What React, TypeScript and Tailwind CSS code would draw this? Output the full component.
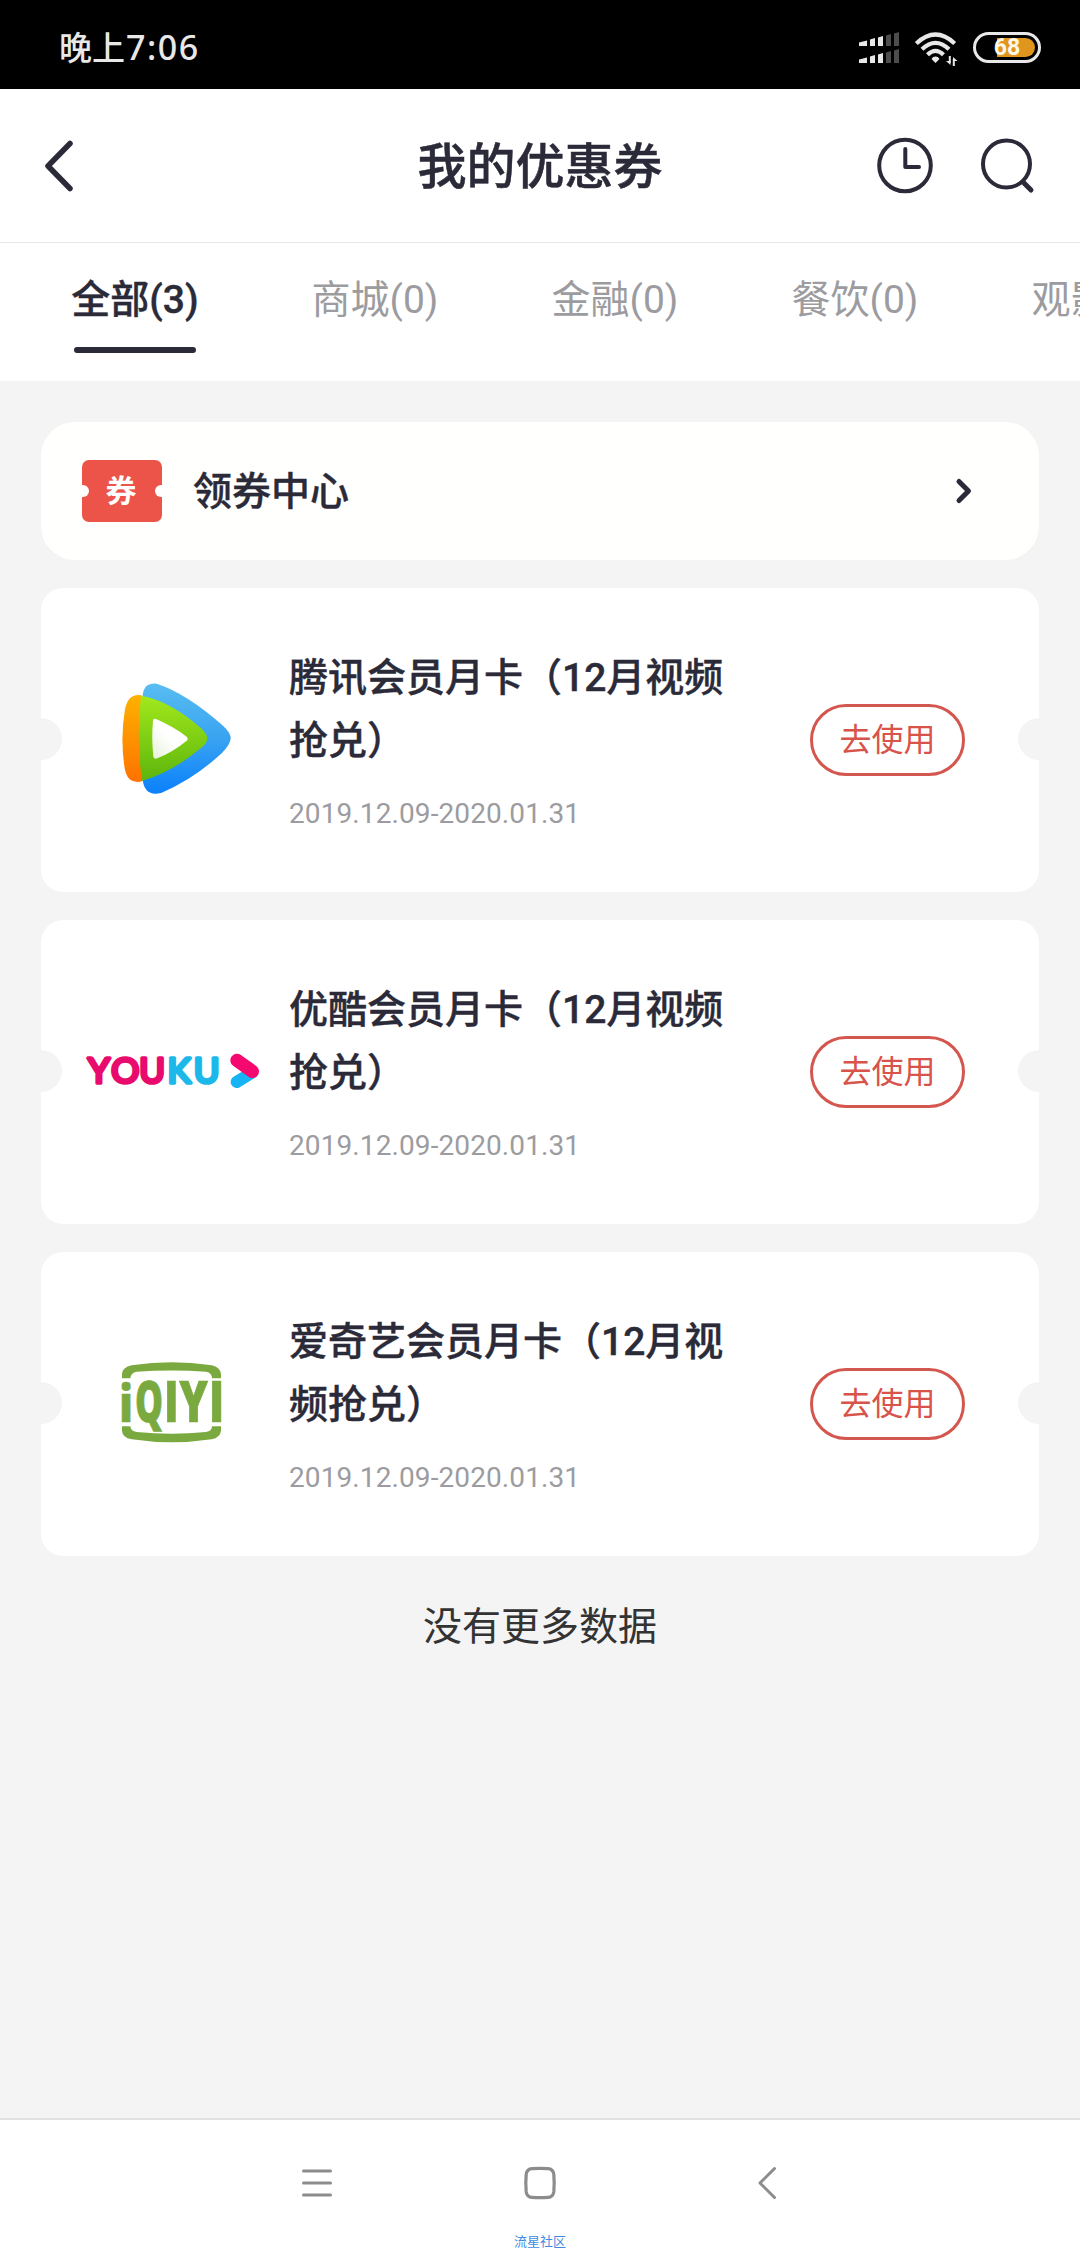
import type { ReactNode } from "react";

function Signal() {
  return (
    <svg className="mt-[6px] h-[33px] w-[41px]" viewBox="0 0 41 33">
      {[0, 17].map((y) => (
        <g key={y} transform={`translate(0 ${y})`}>
          <path d="M0 11.500l8-2V15H0zM11 8.600l5-1.500V15h-5zM19 6.500l5-1.500V15h-5z" fill="#e8e8e8" />
          <path d="M27 4.400l5-1.400v12h-5zM35 2.400L40 1v14h-5z" fill="#4d4d4d" />
        </g>
      ))}
    </svg>
  );
}

function Wifi() {
  return (
    <svg className="ml-[14px] mt-[8px] h-[34px] w-[44px]" viewBox="0 0 44 34" fill="none" stroke="#e8e8e8">
      <path d="M2.300 11.500Q21.500 -6.500 40.700 11.500" strokeWidth="4.200" />
      <path d="M8 17.300Q21.500 4.500 35 17.300" strokeWidth="4.200" />
      <path d="M13.500 22.700Q21.500 15 29.500 22.700" strokeWidth="4.200" />
      <path d="M17.500 27a4.500 4.500 0 0 1 8 0L21.500 31z" fill="#e8e8e8" stroke="none" />
      <path d="M35.800 24v7M39.800 34v-7" strokeWidth="2" />
      <path d="M32 29h4.500v4zM43.500 29H39v-4z" fill="#e8e8e8" stroke="none" />
    </svg>
  );
}

function TencentLogo() {
  return (
    <svg className="size-[178px] shrink-0" viewBox="156 213 534 534">
      <defs>
        <linearGradient id="tb" x1="0" y1="0" x2="0" y2="1">
          <stop offset="0" stopColor="#58bdf0" />
          <stop offset="0.500" stopColor="#39a3f2" />
          <stop offset="1" stopColor="#0a80fb" />
        </linearGradient>
        <linearGradient id="to" x1="0" y1="0" x2="0" y2="1">
          <stop offset="0" stopColor="#fdb200" />
          <stop offset="1" stopColor="#ff7200" />
        </linearGradient>
        <linearGradient id="tg" x1="0" y1="0" x2="0" y2="1">
          <stop offset="0" stopColor="#a2e81c" />
          <stop offset="1" stopColor="#5db50c" />
        </linearGradient>
        <linearGradient id="tw" x1="0" y1="1" x2="1" y2="0">
          <stop offset="0" stopColor="#e6f2d8" />
          <stop offset="0.500" stopColor="#fff" />
        </linearGradient>
      </defs>
      <path d="M338 345Q342 308 380 311Q470 340 580 438Q603 460 602 476Q600 494 575 520Q490 598 395 638Q345 652 338 600Z" fill="url(#tb)" />
      <path d="M335 346Q295 338 285 388Q270 475 284 565Q292 614 337 604Z" fill="url(#to)" />
      <path d="M333 347Q420 362 515 446Q533 463 532 477Q530 492 508 508Q430 574 336 603Q318 475 333 347Z" fill="url(#tg)" />
      <path d="M369 421Q371 414 380 418Q430 440 470 470Q476 477 470 482Q430 515 382 535Q373 539 370 530Q364 475 369 421Z" fill="url(#tw)" />
    </svg>
  );
}

function YoukuLogo() {
  return (
    <svg className="size-[178px] shrink-0" viewBox="156 219 534 534">
      <text
        y="519"
        textAnchor="middle"
        fontFamily="Lato, sans-serif"
        fontSize="105"
        strokeWidth="11"
        strokeLinejoin="round"
        strokeLinecap="round"
        fill="#e80a6c"
        stroke="#e80a6c"
      >
        <tspan x="207">Y</tspan>
        <tspan x="286">O</tspan>
        <tspan x="366">U</tspan>
        <tspan x="447" fill="#1cb8ea" stroke="#1cb8ea">K</tspan>
        <tspan x="530" fill="#1cb8ea" stroke="#1cb8ea">U</tspan>
      </text>
      <path d="M620 516L666 488" stroke="#16b4f4" strokeWidth="36" strokeLinecap="round" />
      <path d="M621 451L667 484" stroke="#f5086f" strokeWidth="40" strokeLinecap="round" />
    </svg>
  );
}

function IqiyiLogo() {
  const letters: [string, number, number, number][] = [
    ["i", 268, 41, 156],
    ["Q", 315, 84, 168],
    ["I", 402, 44, 168],
    ["Y", 448, 86, 168],
    ["I", 536, 47, 168],
  ];
  return (
    <svg className="size-[178px] shrink-0" viewBox="156 225 534 534" fill="#7aaa3f">
      <path d="M276 415V402Q277 382 305 376Q425 358 545 376Q571 382 573 402V415H546Q546 398 528 395Q425 388 320 395Q302 398 301 415Z" />
      <path d="M276 559H301Q302 574 320 576Q425 586 528 576Q546 574 546 559H573V572Q571 592 545 598Q425 616 305 598Q277 592 276 572Z" />
      {letters.map(([c, x, w, size]) => (
        <text
          key={x}
          x={x}
          y="547"
          fontFamily="'Open Sans', sans-serif"
          fontSize={size}
          fontWeight="800"
          textLength={w}
          lengthAdjust="spacingAndGlyphs"
          stroke="#7aaa3f"
          strokeWidth="2"
        >
          {c}
        </text>
      ))}
    </svg>
  );
}

const TABS = ["全部(3)", "商城(0)", "金融(0)", "餐饮(0)", "观影(0)"];

function Coupon({ logo, name }: { logo: ReactNode; name: string }) {
  return (
    <article className="relative flex h-[304px] items-center overflow-hidden rounded-[22px] bg-white pl-[41px] pr-[74px]">
      <span className="absolute -left-[21px] top-[130px] size-[42px] rounded-full bg-[#f4f4f4]" />
      <span className="absolute -right-[21px] top-[130px] size-[42px] rounded-full bg-[#f4f4f4]" />
      {logo}
      <div className="ml-[29px] flex w-[440px] flex-col">
        <h2 className="text-[39px] font-medium leading-[63px] text-[#2b2a38] [-webkit-text-stroke:0.4px_#2b2a38]">{name}</h2>
        <p className="mt-[21px] whitespace-nowrap text-[28px] leading-[40px] tracking-[0.100px] text-[#9c9ca0]">2019.12.09-2020.01.31</p>
      </div>
      <button className="ml-auto flex h-[72px] w-[155px] items-center justify-center rounded-full border-3 border-[#d4574f] text-[32px] text-[#d8534a]">
        去使用
      </button>
    </article>
  );
}

export default function App() {
  return (
    <div className="flex h-[2248px] w-[1080px] flex-col overflow-hidden bg-[#f4f4f4] font-[Roboto,'Noto_Sans_CJK_SC',sans-serif] text-[#2b2a38]">
      <div className="flex h-[89px] items-center bg-black pl-[59px] pr-[39px]">
        <div className="pt-[6px] text-[33px] font-medium text-[#e8e8e8]">
          晚上<span className="ml-px font-['Noto_Sans',sans-serif] text-[34px] tracking-[1.500px]">7:06</span>
        </div>
        <div className="ml-auto flex items-center">
          <Signal />
          <Wifi />
          <div className="relative ml-[15px] mt-[6px] h-[31px] w-[68px] rounded-full border-3 border-[#e8e8e8] p-[3px]">
            <div className="ml-auto h-full w-[38px] rounded-l-[2px] rounded-r-full bg-[#e0951d]" />
            <span className="absolute inset-0 text-center text-[23px] font-bold leading-[26px] text-[#fff8e8]">68</span>
          </div>
        </div>
      </div>

      <header className="grid h-[154px] grid-cols-3 items-center border-b border-[#e6e6e8] bg-white px-[43px] pt-px">
        <svg className="h-[54px] w-[32px]" viewBox="0 0 32 54" fill="none" stroke="#2b2a38" strokeWidth="5.500" strokeLinecap="round" strokeLinejoin="round">
          <path d="M27 4.500L5 27L27 49.500" />
        </svg>
        <h1 className="whitespace-nowrap pt-[4px] text-center text-[49px] font-medium [-webkit-text-stroke:0.500px_#2b2a38]">我的优惠券</h1>
        <div className="flex items-center justify-end gap-[42px]">
          <svg className="size-[60px]" viewBox="0 0 60 60" fill="none" stroke="#2b2a38" strokeWidth="4" strokeLinecap="round" strokeLinejoin="round">
            <circle cx="30" cy="29.500" r="25.800" />
            <path d="M30.300 13V31H44" />
          </svg>
          <svg className="size-[60px]" viewBox="0 0 60 60" fill="none" stroke="#2b2a38" strokeWidth="4" strokeLinecap="round">
            <circle cx="29.500" cy="28" r="23.500" />
            <path d="M46 46L54 54" strokeWidth="5" />
          </svg>
        </div>
      </header>

      <nav className="flex h-[138px] shrink-0 bg-white pl-[15px]">
        {TABS.map((t, i) => (
          <div key={t} className="flex w-[240px] shrink-0 flex-col items-center pt-[29px]">
            <span className={i === 0 ? "text-[39px] font-medium leading-[56px] [-webkit-text-stroke:0.4px_#2b2a38]" : "text-[39px] leading-[56px] text-[#9c9ca0]"}>{t}</span>
            {i === 0 && <span className="mt-[19px] h-[6px] w-[122px] rounded-full bg-[#2b2a38]" />}
          </div>
        ))}
      </nav>

      <main className="flex flex-1 flex-col gap-[28px] px-[41px] pt-[41px]">
        <section className="flex h-[138px] items-center rounded-[34px] bg-[#fffffd] pl-[41px] pr-[64px]">
          <div className="relative flex h-[62px] w-[80px] items-center justify-center overflow-hidden rounded-[7px] bg-[#ec544a] text-[31px] font-bold text-white">
            <span className="absolute -left-[5px] size-[12px] rounded-full bg-[#fffffd]" />
            <span className="absolute -right-[5px] size-[12px] rounded-full bg-[#fffffd]" />
            <span className="pr-[2px] pt-[2px]">券</span>
          </div>
          <h2 className="ml-[31px] pt-[3px] text-[39px] font-medium [-webkit-text-stroke:0.4px_#2b2a38]">领券中心</h2>
          <svg className="ml-auto h-[30px] w-[22px]" viewBox="0 0 22 30" fill="none" stroke="#2b2a38" strokeWidth="5" strokeLinecap="round" strokeLinejoin="round">
            <path d="M6 5.500L15.500 15L6 24.500" />
          </svg>
        </section>
        <Coupon logo={<TencentLogo />} name="腾讯会员月卡（12月视频抢兑）" />
        <Coupon logo={<YoukuLogo />} name="优酷会员月卡（12月视频抢兑）" />
        <Coupon logo={<IqiyiLogo />} name="爱奇艺会员月卡（12月视频抢兑）" />
        <p className="mt-[15px] text-center text-[39px] leading-[56px] text-[#333]">没有更多数据</p>
      </main>

      <footer className="relative flex h-[130px] shrink-0 items-center justify-between border-t-2 border-[#e2e2e2] bg-white px-[300px] pb-[2px]">
        <svg className="h-[34px] w-[34px]" viewBox="0 0 34 34" stroke="#8c8c8c" strokeWidth="3" strokeLinecap="round">
          <path d="M3.500 5H30.500M3.500 17H30.500M3.500 29H30.500" />
        </svg>
        <svg className="mr-[10px] size-[34px]" viewBox="0 0 34 34" fill="none" stroke="#8c8c8c" strokeWidth="3.200">
          <path d="M9 2.600Q17 2 25 2.600Q30 3 30.800 8Q31.600 17 30.800 26Q30 31 25 31.400Q17 32 9 31.400Q4 31 3.200 26Q2.400 17 3.200 8Q4 3 9 2.600Z" />
        </svg>
        <svg className="h-[34px] w-[24px]" viewBox="0 0 24 34" fill="none" stroke="#8c8c8c" strokeWidth="3" strokeLinecap="round" strokeLinejoin="round">
          <path d="M18.500 2.500L4 17L18.500 31.500" />
        </svg>
        <span className="absolute inset-x-0 bottom-[-3px] text-center text-[13px] leading-[18px] text-[#3f8ce0]">流星社区</span>
      </footer>
    </div>
  );
}
